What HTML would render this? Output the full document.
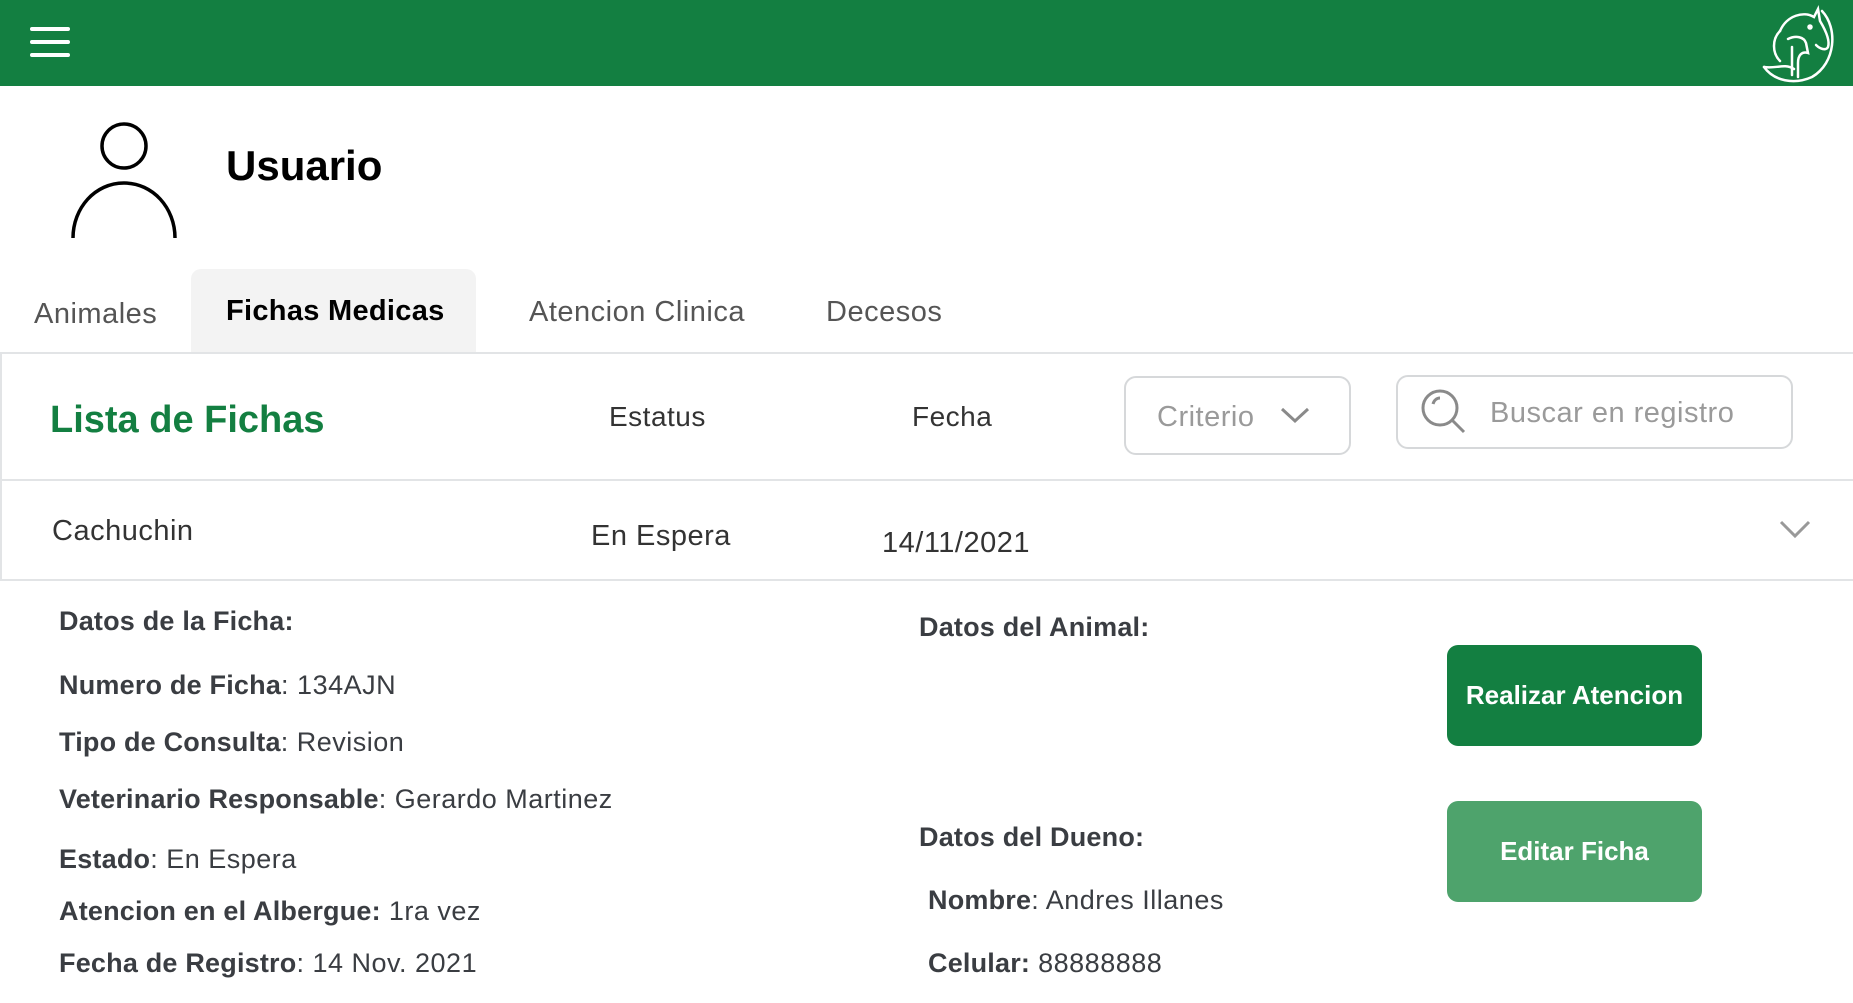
<!DOCTYPE html>
<html><head><meta charset="utf-8"><style>
*{margin:0;padding:0;box-sizing:border-box}
body{width:1853px;height:1003px;background:#fff;font-family:"Liberation Sans",Arial,sans-serif;position:relative;overflow:hidden;color:#3a3d42}
.a{position:absolute;white-space:nowrap;line-height:1}
.hdr{position:absolute;left:0;top:0;width:1853px;height:86px;background:#137f41}
.bar{position:absolute;left:30px;width:40px;height:4px;background:#fff;border-radius:2px}
.tab{font-size:29px;color:#555;letter-spacing:0.5px}
.d{font-size:27px;color:#3a3d42;letter-spacing:0.5px}
.d b{font-weight:700;letter-spacing:0.2px}
.btn{position:absolute;left:1447px;width:255px;height:101px;border-radius:11px;color:#fff;font-weight:700;font-size:26px;display:flex;align-items:center;justify-content:center}
</style></head><body>
<div class="hdr">
<div class="bar" style="top:27px"></div><div class="bar" style="top:40px"></div><div class="bar" style="top:53px"></div>
<svg style="position:absolute;left:1752px;top:3px" width="86" height="80" viewBox="0 0 86 80" fill="none" stroke="#fff" stroke-width="2.5" stroke-linecap="round">
<path d="M70 8 C86 25 84 60 60 74 C42 82 22 78 12 64"/>
<path d="M12 64 C24 66 32 60 42 66"/>
<path d="M28 28 C35 12 52 8 62 14 L66 6 L68 18 C74 28 78 38 76 44 C74 48 68 46 64 42"/>
<path d="M28 28 C20 36 20 50 28 58"/>
<path d="M36 36 C44 32 52 34 54 40 L56 50 C50 48 46 52 46 60 L46 74"/>
<path d="M40 44 L40 72"/>
<circle cx="58" cy="24" r="1.5" fill="#fff"/>
</svg>
</div>
<svg style="position:absolute;left:70px;top:120px" width="112" height="120" viewBox="0 0 112 120" fill="none" stroke="#000" stroke-width="3.5">
<circle cx="54" cy="26" r="22"/>
<path d="M3 118 C3 88 25 63 54 63 C83 63 105 88 105 118"/>
</svg>
<div class="a" style="left:226px;top:145px;font-size:42px;font-weight:700;color:#000">Usuario</div>
<div style="position:absolute;left:191px;top:269px;width:285px;height:84px;background:#f3f3f3;border-radius:10px 10px 0 0"></div>
<div class="a tab" style="left:34px;top:300px">Animales</div>
<div class="a tab" style="left:226px;top:297px;color:#000;font-weight:700;font-size:29px;letter-spacing:0.3px">Fichas Medicas</div>
<div class="a tab" style="left:529px;top:298px">Atencion Clinica</div>
<div class="a tab" style="left:826px;top:298px">Decesos</div>
<div style="position:absolute;left:0;top:352px;width:1870px;height:229px;border:2px solid #e2e4e6;border-right:none;border-radius:0 14px 0 0"></div>
<div style="position:absolute;left:0;top:479px;width:1853px;height:2px;background:#e2e4e6"></div>
<div class="a" style="left:50px;top:401px;font-size:38px;font-weight:700;color:#137f41">Lista de Fichas</div>
<div class="a" style="left:609px;top:403px;font-size:28px;color:#333;letter-spacing:0.5px">Estatus</div>
<div class="a" style="left:912px;top:403px;font-size:28px;color:#333;letter-spacing:0.5px">Fecha</div>
<div style="position:absolute;left:1124px;top:376px;width:227px;height:79px;border:2px solid #d6d8da;border-radius:12px"></div>
<div class="a" style="left:1157px;top:403px;font-size:29px;color:#9a9a9a;letter-spacing:0.5px">Criterio</div>
<svg style="position:absolute;left:1279px;top:405px" width="32" height="20" viewBox="0 0 32 20" fill="none" stroke="#8a8a8a" stroke-width="3"><path d="M3 4 L16 16 L29 4"/></svg>
<div style="position:absolute;left:1396px;top:375px;width:397px;height:74px;border:2px solid #d6d8da;border-radius:12px"></div>
<svg style="position:absolute;left:1420px;top:388px" width="48" height="48" viewBox="0 0 48 48" fill="none" stroke="#8a8a8a" stroke-width="3"><circle cx="20" cy="20" r="17"/><path d="M32 32 L44 44"/><path d="M13 16 C14 12 17 10 20 10"/></svg>
<div class="a" style="left:1490px;top:399px;font-size:29px;color:#9a9a9a;letter-spacing:0.5px">Buscar en registro</div>
<div class="a" style="left:52px;top:517px;font-size:29px;color:#333;letter-spacing:0.5px">Cachuchin</div>
<div class="a" style="left:591px;top:522px;font-size:29px;color:#333;letter-spacing:0.5px">En Espera</div>
<div class="a" style="left:882px;top:529px;font-size:29px;color:#333;letter-spacing:0.5px">14/11/2021</div>
<svg style="position:absolute;left:1778px;top:518px" width="34" height="22" viewBox="0 0 34 22" fill="none" stroke="#999" stroke-width="3"><path d="M3 4 L17 18 L31 4"/></svg>
<div class="a d" style="left:59px;top:608px"><b>Datos de la Ficha:</b></div>
<div class="a d" style="left:59px;top:672px"><b>Numero de Ficha</b>: 134AJN</div>
<div class="a d" style="left:59px;top:729px"><b>Tipo de Consulta</b>: Revision</div>
<div class="a d" style="left:59px;top:786px"><b>Veterinario Responsable</b>: Gerardo Martinez</div>
<div class="a d" style="left:59px;top:846px"><b>Estado</b>: En Espera</div>
<div class="a d" style="left:59px;top:898px"><b>Atencion en el Albergue:</b> 1ra vez</div>
<div class="a d" style="left:59px;top:950px"><b>Fecha de Registro</b>: 14 Nov. 2021</div>
<div class="a d" style="left:919px;top:614px"><b>Datos del Animal:</b></div>
<div class="a d" style="left:919px;top:824px"><b>Datos del Dueno:</b></div>
<div class="a d" style="left:928px;top:887px"><b>Nombre</b>: Andres Illanes</div>
<div class="a d" style="left:928px;top:950px"><b>Celular:</b> 88888888</div>
<div class="btn" style="top:645px;background:#137f41">Realizar Atencion</div>
<div class="btn" style="top:801px;background:#4ea36c">Editar Ficha</div>
</body></html>
